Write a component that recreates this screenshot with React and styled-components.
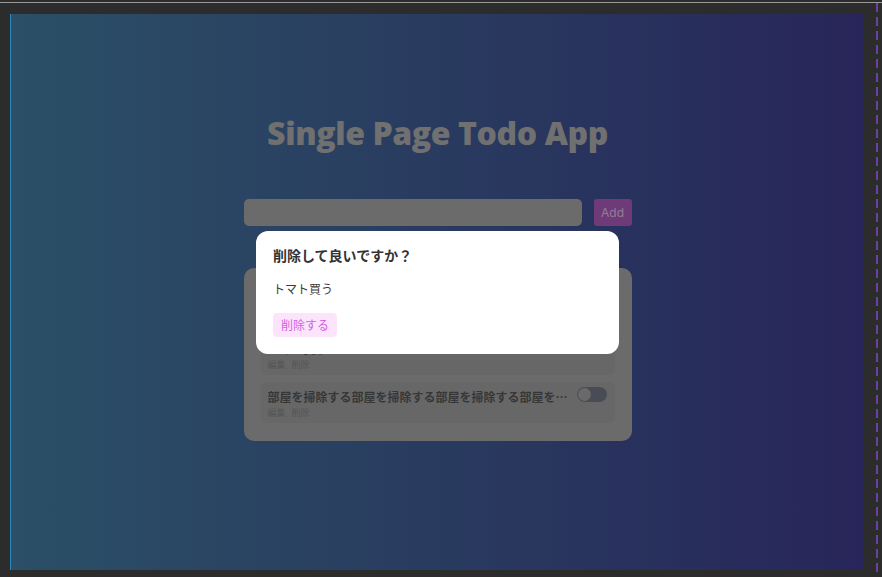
import React from "react";
import styled, { createGlobalStyle } from "styled-components";

const GlobalStyle = createGlobalStyle`
  html, body { margin: 0; padding: 0; }
  body {
    background: #2c2c2c;
    font-family: "Noto Sans", "Noto Sans CJK JP", sans-serif;
    overflow: hidden;
  }
`;

const Workspace = styled.div`
  position: relative;
  height: 577px;
  display: flex;
  flex-direction: column;
`;

const Ruler = styled.div`
  margin-top: 2px;
  height: 1px;
  background: #9a9a9a;
`;

const Stage = styled.div`
  display: flex;
  padding: 11px 0 0 10px;
`;

const Frame = styled.div`
  position: relative;
  width: 853px;
  height: 556px;
  border-left: 1px solid #2f88bd;
  background: linear-gradient(90deg, #4885ac 0%, #45639f 50%, #443f96 100%);
  overflow: hidden;
`;

const Guide = styled.div`
  position: absolute;
  left: 876px;
  top: 3px;
  bottom: 0;
  width: 2px;
  background: repeating-linear-gradient(
    to bottom,
    #6b3fa3 0px,
    #6b3fa3 9px,
    transparent 9px,
    transparent 14px
  );
`;

const Page = styled.main`
  display: flex;
  flex-direction: column;
  align-items: center;
  padding-top: 95px;
`;

const Title = styled.h1`
  margin: 0;
  font-family: "Open Sans", "Noto Sans", sans-serif;
  font-weight: 800;
  font-size: 32px;
  line-height: 48px;
  color: #bbbbbb;
  letter-spacing: -0.4px;
`;

const Form = styled.form`
  margin-top: 42px;
  display: flex;
  gap: 12px;
`;

const Input = styled.input`
  width: 338px;
  height: 27px;
  box-sizing: border-box;
  border: none;
  border-radius: 5px;
  background: #b2b2b2;
  outline: none;
`;

const AddButton = styled.button`
  width: 38px;
  height: 27px;
  border: none;
  border-radius: 3px;
  background: #b761c8;
  color: #f8cffa;
  font-family: "Inter", "Noto Sans", sans-serif;
  font-size: 12px;
  padding: 0;
`;

const Card = styled.section`
  margin-top: 42px;
  width: 388px;
  box-sizing: border-box;
  padding: 18px 17px;
  background: #b2b2b2;
  border-radius: 10px;
  display: flex;
  flex-direction: column;
  gap: 7px;
`;

const Item = styled.div`
  height: 41px;
  box-sizing: border-box;
  padding: 5px 8px 5px 7px;
  background: #acacac;
  border-radius: 6px;
  display: flex;
  align-items: flex-start;
  gap: 8px;
`;

const ItemBody = styled.div`
  flex: 1;
  min-width: 0;
  padding-top: 2px;
`;

const ItemText = styled.div`
  font-family: "Noto Sans CJK JP", sans-serif;
  font-weight: 700;
  font-size: 12px;
  line-height: 16px;
  color: #5c5c5c;
  white-space: nowrap;
  overflow: hidden;
  text-overflow: ellipsis;
`;

const Actions = styled.div`
  margin-top: 2px;
  display: flex;
  gap: 6px;
  font-family: "Noto Sans CJK JP", sans-serif;
  font-size: 9px;
  line-height: 12px;
  color: #8e8e8e;
`;

const Toggle = styled.span`
  flex: none;
  position: relative;
  width: 30px;
  height: 15px;
  border-radius: 8px;
  background: ${(p) => (p.$on ? "#b742c8" : "#7b7f8c")};
  &::after {
    content: "";
    position: absolute;
    top: 1px;
    left: ${(p) => (p.$on ? "16px" : "1px")};
    width: 13px;
    height: 13px;
    border-radius: 50%;
    background: #b0b0b0;
  }
`;

const Backdrop = styled.div`
  position: absolute;
  inset: 0;
  background: rgba(0, 0, 0, 0.4);
  display: flex;
  align-items: center;
  justify-content: center;
`;

const Modal = styled.div`
  width: 363px;
  box-sizing: border-box;
  padding: 14px 16px 17px 17px;
  background: #ffffff;
  border-radius: 12px;
  display: flex;
  flex-direction: column;
  align-items: flex-start;
  font-family: "Noto Sans CJK JP", sans-serif;
`;

const ModalTitle = styled.h2`
  margin: 0;
  font-size: 14px;
  line-height: 20px;
  font-weight: 700;
  color: #333333;
`;

const ModalText = styled.p`
  margin: 15px 0 0;
  font-size: 12px;
  line-height: 18px;
  color: #3c3c3c;
`;

const DangerButton = styled.button`
  margin-top: 15px;
  height: 24px;
  padding: 0 8px;
  border: none;
  border-radius: 4px;
  background: #fce4fd;
  color: #d45fe0;
  font-family: "Noto Sans CJK JP", sans-serif;
  font-size: 12px;
  line-height: 24px;
`;

const todos = [
  { text: "牛乳を買う", done: false },
  { text: "トマト買う", done: true },
  { text: "部屋を掃除する部屋を掃除する部屋を掃除する部屋を掃除する", done: false },
];

export default function App() {
  return (
    <>
      <GlobalStyle />
      <Workspace>
        <Ruler />
        <Stage>
          <Frame>
            <Page>
              <Title>Single Page Todo App</Title>
              <Form onSubmit={(e) => e.preventDefault()}>
                <Input type="text" />
                <AddButton type="submit">Add</AddButton>
              </Form>
              <Card>
                {todos.map((t, i) => (
                  <Item key={i}>
                    <ItemBody>
                      <ItemText>{t.text}</ItemText>
                      <Actions>
                        <span>編集</span>
                        <span>削除</span>
                      </Actions>
                    </ItemBody>
                    <Toggle $on={t.done} />
                  </Item>
                ))}
              </Card>
            </Page>
            <Backdrop>
              <Modal>
                <ModalTitle>削除して良いですか？</ModalTitle>
                <ModalText>トマト買う</ModalText>
                <DangerButton>削除する</DangerButton>
              </Modal>
            </Backdrop>
          </Frame>
        </Stage>
        <Guide />
      </Workspace>
    </>
  );
}
